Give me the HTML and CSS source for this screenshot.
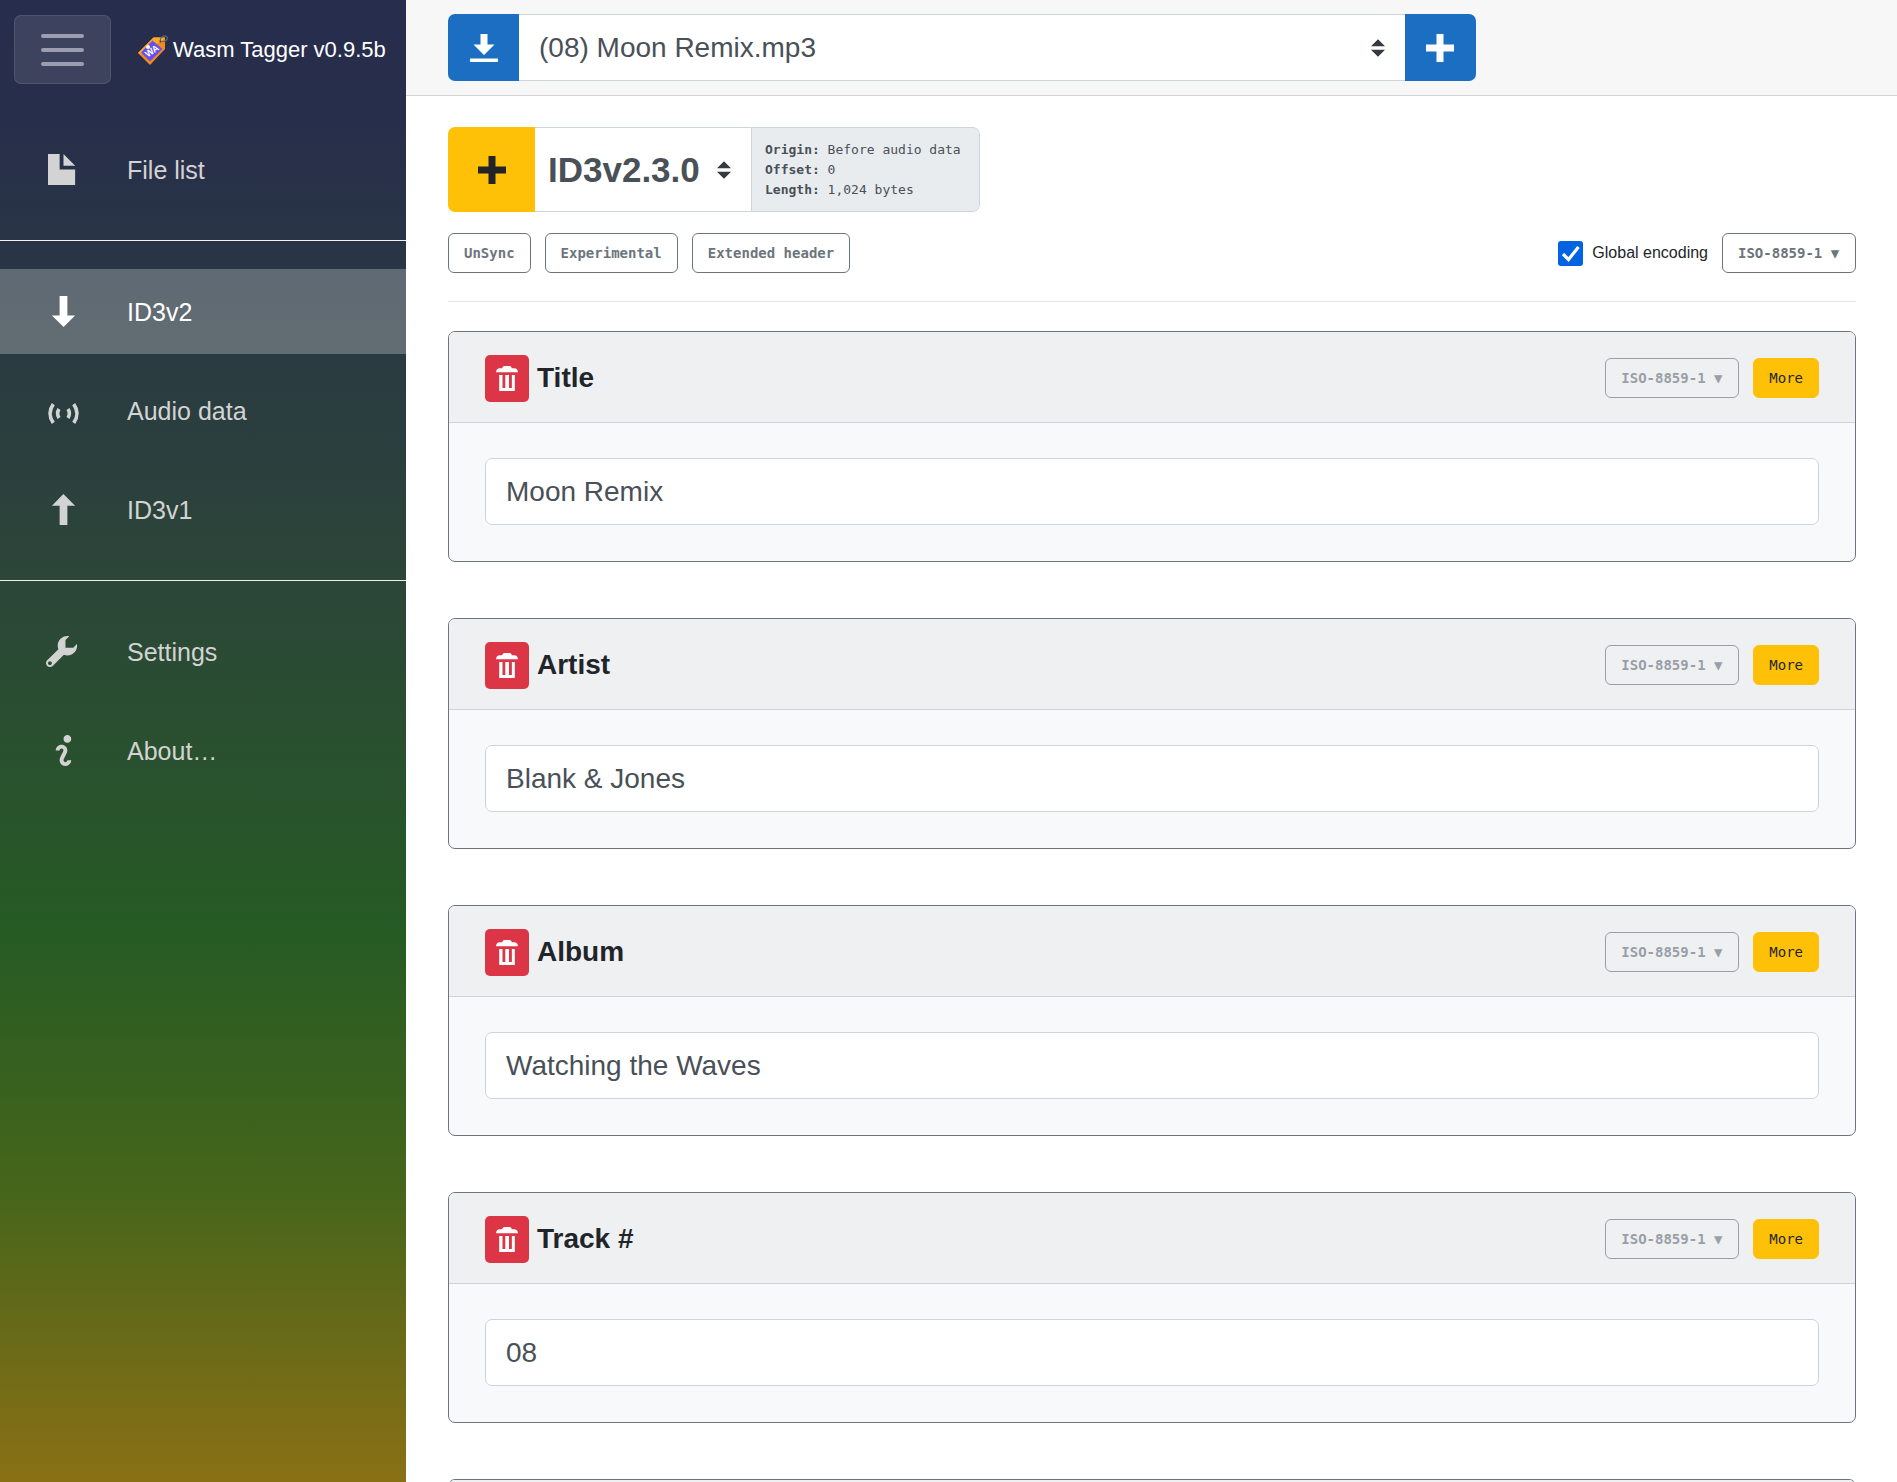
FILE: index.html
```html
<!DOCTYPE html>
<html lang="en">
<head>
<meta charset="utf-8">
<meta name="viewport" content="width=device-width, initial-scale=1">
<title>Wasm Tagger</title>
<link rel="stylesheet" href="styles.css">
</head>
<body>
<svg class="sprite" aria-hidden="true">
  <symbol id="i-file" viewBox="0 0 8 8"><path d="M0 0v8h7v-4h-4v-4h-3zm4 0v3h3l-3-3z"/></symbol>
  <symbol id="i-down" viewBox="-1 0 8 8"><path d="M2 0v5h-2l3.03 3 2.97-3h-2v-5h-2z"/></symbol>
  <symbol id="i-up" viewBox="-1 0 8 8"><path d="M2.97 0l-2.97 3h2v5h2v-5h2l-3.03-3z"/></symbol>
  <symbol id="i-audio" viewBox="0 0 31 31"><g fill="none" stroke="currentColor"><path stroke-width="3.6" d="M5.300 9.100Q-1.300 18.500 5.300 27.900M25.700 9.100Q32.300 18.500 25.700 27.900"/><path stroke-width="3.600" d="M11 14Q8.200 18.500 11 23M20 14Q22.800 18.500 20 23"/></g></symbol>
  <symbol id="i-wrench" viewBox=".5 0 8 8" overflow="visible"><path d="M5.500 0c-1.380 0-2.500 1.120-2.500 2.500 0 .32.080.62.190.91l-2.910 2.880c-.39.390-.39 1.050 0 1.440.2.200.46.280.72.280.26 0 .52-.09.720-.28l2.880-2.910c.28.110.58.190.91.190 1.380 0 2.500-1.120 2.500-2.500 0-.16 0-.32-.03-.47l-.97.970h-2v-2l.97-.97c-.15-.03-.31-.03-.47-.03zm-4.500 6.500c.28 0 .5.220.5.500s-.22.500-.5.500-.5-.22-.5-.5.220-.5.500-.5z"/></symbol>
  <symbol id="i-info" viewBox="-2 0 8 8"><path d="M3 0c-.55 0-1 .45-1 1s.45 1 1 1 1-.45 1-1-.45-1-1-1zm-1.500 2.500c-.83 0-1.500.67-1.500 1.500h1c0-.28.220-.5.500-.5s.5.220.5.500-1 1.640-1 2.500c0 .86.670 1.500 1.500 1.500s1.500-.67 1.500-1.500h-1c0 .28-.22.500-.5.500s-.5-.22-.5-.5c0-.36 1-1.840 1-2.500 0-.81-.67-1.500-1.500-1.500z"/></symbol>
  <symbol id="i-download" viewBox="0 0 8 8"><path d="M3 0v3h-2l3 3 3-3h-2v-3h-2zm-3 7v1h8v-1h-8z"/></symbol>
  <symbol id="i-plus" viewBox="0 0 8 8"><path d="M3 0v3h-3v2h3v3h2v-3h3v-2h-3v-3h-2z"/></symbol>
  <symbol id="i-trash" viewBox="0 0 7 8"><path d="M3 0c-.55 0-1 .1-1 .7h-.8c-.7 0-1.200.5-1.200 1.300h7c0-.8-.5-1.300-1.200-1.300h-.8c0-.6-.45-.7-1-.7zM1 2.900v5.100h5v-5.100h-.95v4.100h-.9v-4.100h-1.200v4.100h-.9v-4.100z"/></symbol>
</svg>

<div class="app">
  <aside class="sidebar">
    <div class="brand-bar">
      <button class="menu-button" type="button" aria-label="Toggle menu">
        <svg viewBox="0 0 43 32" width="43" height="32" fill="none" stroke="currentColor" stroke-width="4" stroke-linecap="round"><path d="M2 2h39M2 16h39M2 30h39"/></svg>
      </button>
      <a class="brand" href="#">
        <svg class="logo" viewBox="0 0 30 30" aria-hidden="true">
          <path fill="#f58a1b" d="M0 18L15.500 2.500H27V14L12 30z"/>
          <path fill="#ffa928" d="M0 18L15.500 2.500H27L25 5L2.500 19z"/>
          <path fill="#654ff0" d="M3 17.500L14.500 5.500L24.500 14L12 26.500z"/>
          <circle cx="10" cy="12" r="2" fill="#fff"/>
          <path fill="none" stroke="#506873" stroke-width="1.200" d="M22 6C22 2 26 0 28.500 1.500C31 3 28 7 24 6.500"/>
          <circle cx="22.500" cy="6.500" r="1" fill="#3a3550"/>
          <text class="logo-text" x="14" y="19" text-anchor="middle" transform="rotate(-35 14 16)">WA</text>
        </svg>
        <span>Wasm Tagger v0.9.5b</span>
      </a>
    </div>
    <nav>
      <ul class="nav-group">
        <li><a class="nav-link" href="#files"><svg class="nav-icon"><use href="#i-file"/></svg>File list</a></li>
      </ul>
      <ul class="nav-group">
        <li><a class="nav-link active" href="#id3v2" aria-current="page"><svg class="nav-icon"><use href="#i-down"/></svg>ID3v2</a></li>
        <li><a class="nav-link" href="#audio"><svg class="nav-icon"><use href="#i-audio"/></svg>Audio data</a></li>
        <li><a class="nav-link" href="#id3v1"><svg class="nav-icon"><use href="#i-up"/></svg>ID3v1</a></li>
      </ul>
      <ul class="nav-group">
        <li><a class="nav-link" href="#settings"><svg class="nav-icon"><use href="#i-wrench"/></svg>Settings</a></li>
        <li><a class="nav-link" href="#about"><svg class="nav-icon"><use href="#i-info"/></svg>About…</a></li>
      </ul>
    </nav>
  </aside>

  <main class="main">
    <header class="topbar">
      <div class="file-group">
        <button class="btn-primary" type="button" aria-label="Download"><svg class="icon"><use href="#i-download"/></svg></button>
        <select class="file-select" aria-label="File"><option>(08) Moon Remix.mp3</option></select>
        <button class="btn-primary" type="button" aria-label="Add file"><svg class="icon"><use href="#i-plus"/></svg></button>
      </div>
    </header>

    <div class="content">
      <div class="tag-group">
        <button class="add-frame" type="button" aria-label="Add frame"><svg class="icon"><use href="#i-plus"/></svg></button>
        <select class="version-select" aria-label="Tag version"><option>ID3v2.3.0</option></select>
        <div class="tag-info">
          <div><b>Origin:</b> Before audio data</div>
          <div><b>Offset:</b> 0</div>
          <div><b>Length:</b> 1,024 bytes</div>
        </div>
      </div>

      <div class="toolbar">
        <button class="btn-small" type="button">UnSync</button>
        <button class="btn-small" type="button">Experimental</button>
        <button class="btn-small" type="button">Extended header</button>
        <label class="check"><input type="checkbox" checked>Global encoding</label>
        <select class="btn-small" aria-label="Global encoding type"><option>ISO-8859-1 ▼</option></select>
      </div>

      <div class="frames">
        <section class="card">
          <div class="card-header">
            <button class="btn-delete" type="button" aria-label="Delete Title"><svg><use href="#i-trash"/></svg></button>
            <h2><label for="f-title">Title</label></h2>
            <select class="btn-small" aria-label="Title encoding" disabled><option>ISO-8859-1 ▼</option></select>
            <button class="btn-more" type="button">More</button>
          </div>
          <div class="card-body"><input id="f-title" type="text" value="Moon Remix"></div>
        </section>
        <section class="card">
          <div class="card-header">
            <button class="btn-delete" type="button" aria-label="Delete Artist"><svg><use href="#i-trash"/></svg></button>
            <h2><label for="f-artist">Artist</label></h2>
            <select class="btn-small" aria-label="Artist encoding" disabled><option>ISO-8859-1 ▼</option></select>
            <button class="btn-more" type="button">More</button>
          </div>
          <div class="card-body"><input id="f-artist" type="text" value="Blank &amp; Jones"></div>
        </section>
        <section class="card">
          <div class="card-header">
            <button class="btn-delete" type="button" aria-label="Delete Album"><svg><use href="#i-trash"/></svg></button>
            <h2><label for="f-album">Album</label></h2>
            <select class="btn-small" aria-label="Album encoding" disabled><option>ISO-8859-1 ▼</option></select>
            <button class="btn-more" type="button">More</button>
          </div>
          <div class="card-body"><input id="f-album" type="text" value="Watching the Waves"></div>
        </section>
        <section class="card">
          <div class="card-header">
            <button class="btn-delete" type="button" aria-label="Delete Track #"><svg><use href="#i-trash"/></svg></button>
            <h2><label for="f-track">Track #</label></h2>
            <select class="btn-small" aria-label="Track encoding" disabled><option>ISO-8859-1 ▼</option></select>
            <button class="btn-more" type="button">More</button>
          </div>
          <div class="card-body"><input id="f-track" type="text" value="08"></div>
        </section>
        <section class="card">
          <div class="card-header"></div>
        </section>
      </div>
    </div>
  </main>
</div>
</body>
</html>
```

FILE: styles.css
```css
* { box-sizing: border-box; }

body {
  margin: 0;
  background: #fff;
  color: #212529;
  font: 28px/42px "Liberation Sans", Arial, sans-serif;
}

button, input, select { margin: 0; font: inherit; }
select { appearance: none; }
svg { display: block; fill: currentColor; }
.sprite { display: none; }
.icon { width: 28px; height: 28px; }

.app {
  display: flex;
  height: 100vh;
  overflow: hidden;
}

/* Sidebar */
.sidebar {
  flex: 0 0 406px;
  color: #fff;
  background: linear-gradient(180deg, #272d4c 0%, #272e4b 8%, #2c4539 38%, #28532c 54%, #265b24 63%, #45651b 80%, #8a7015 100%);
}

.brand-bar {
  display: flex;
  align-items: center;
  gap: 27px;
  height: 99px;
  padding: 0 14px;
}

.menu-button {
  display: flex;
  align-items: center;
  justify-content: center;
  width: 97px;
  height: 69px;
  color: #9c9db0;
  background: rgba(255, 255, 255, .1);
  border: 1px solid rgba(255, 255, 255, .1);
  border-radius: 7px;
}

.brand {
  display: flex;
  align-items: center;
  gap: 5px;
  color: #fff;
  font-size: 22px;
  white-space: nowrap;
  text-decoration: none;
}

.logo { width: 30px; height: 30px; }
.logo-text { fill: #fff; font-size: 9px; font-weight: 700; }

.nav-group {
  display: flex;
  flex-direction: column;
  gap: 14px;
  margin: 0;
  padding: 28px 0;
  list-style: none;
}

.nav-group + .nav-group { border-top: 1px solid #f0f0f0; }

.nav-link {
  display: flex;
  align-items: center;
  gap: 48px;
  height: 85px;
  padding: 0 48px;
  color: #d3d3d3;
  font-size: 25px;
  text-decoration: none;
}

.nav-link.active {
  color: #fff;
  background: rgba(255, 255, 255, .26);
}

.nav-icon { width: 31px; height: 31px; overflow: visible; }
symbol { overflow: visible; }

/* Top bar */
.main { flex: 1; min-width: 0; }

.topbar {
  padding: 14px 41px 14px 42px;
  background: #f7f7f7;
  border-bottom: 1px solid #d3d6d8;
}

.file-group {
  display: flex;
  width: 73%;
  height: 67px;
  border-radius: 7px;
  overflow: hidden;
}

.btn-primary {
  display: flex;
  align-items: center;
  justify-content: center;
  flex: 0 0 71px;
  color: #fff;
  background: #1b6ec2;
  border: 0;
}

.file-select, .version-select {
  color: #495057;
  background: #fff url("data:image/svg+xml,%3Csvg xmlns='http://www.w3.org/2000/svg' viewBox='0 0 4 5'%3E%3Cpath fill='%23343a40' d='M2 0L0 2h4zm0 5L0 3h4z'/%3E%3C/svg%3E") no-repeat right 20px center / 14px 18px;
  border: 1px solid #ced4da;
  border-width: 1px 0;
  border-radius: 0;
}

.file-select {
  flex: 1;
  min-width: 0;
  padding: 0 48px 0 20px;
}

/* Tag header */
.content { padding: 31px 41px 0 42px; }

.tag-group {
  display: flex;
  width: fit-content;
  height: 85px;
  border-radius: 7px;
  overflow: hidden;
}

.add-frame {
  display: flex;
  align-items: center;
  justify-content: center;
  width: 87px;
  color: #212529;
  background: #ffc107;
  border: 0;
}

.version-select {
  padding: 0 51px 0 13px;
  font-size: 35px;
  font-weight: 700;
}

.tag-info {
  display: flex;
  flex-direction: column;
  justify-content: center;
  padding: 0 18px 0 13px;
  color: #495057;
  background: #e9ecef;
  border: 1px solid #ced4da;
  border-radius: 0 7px 7px 0;
  font: 13px/20px "DejaVu Sans Mono", monospace;
  white-space: nowrap;
}

.toolbar {
  display: flex;
  align-items: center;
  gap: 14px;
  margin-top: 21px;
  padding-bottom: 28px;
  border-bottom: 1px solid #e5e5e5;
}

.btn-small, .btn-more {
  height: 40px;
  padding: 0 15px;
  border: 1px solid #6c757d;
  border-radius: 6px;
  font: 700 14px/20px "DejaVu Sans Mono", monospace;
}

.btn-small { color: #6c757d; background: transparent; }
.btn-small:disabled { opacity: .65; }

.btn-more {
  color: #212529;
  background: #ffc107;
  border-color: #ffc107;
  font-weight: 400;
}

.check {
  display: flex;
  align-items: center;
  gap: 9px;
  margin-left: auto;
  font-size: 16px;
  line-height: 24px;
}

.check input {
  appearance: none;
  width: 25px;
  height: 25px;
  border-radius: 3px;
  background: #0063e1 url("data:image/svg+xml,%3Csvg xmlns='http://www.w3.org/2000/svg' viewBox='0 0 25 25'%3E%3Cpath fill='none' stroke='%23fff' stroke-width='3.200' d='M5 13l5.500 5.500L20.500 6'/%3E%3C/svg%3E");
}

/* Frame cards */
.frames {
  display: flex;
  flex-direction: column;
  gap: 56px;
  margin-top: 29px;
}

.card {
  background: #f8f9fb;
  border: 1px solid #6c757d;
  border-radius: 7px;
  overflow: hidden;
}

.card-header {
  display: flex;
  align-items: center;
  gap: 14px;
  height: 91px;
  padding: 2px 36px 0;
  background: #eff0f2;
  border-bottom: 1px solid #d0d3d6;
}

.card-header h2 {
  flex: 1;
  margin: 0 0 0 -6px;
  font-size: 28px;
  font-weight: 700;
}

.btn-delete {
  display: flex;
  align-items: center;
  justify-content: center;
  width: 44px;
  height: 47px;
  padding: 0;
  color: #fff;
  background: #dc3545;
  border: 0;
  border-radius: 5px;
}

.btn-delete svg { width: 22px; height: 25px; }

.card-body { padding: 35px 36px 36px; }

.card-body input {
  display: block;
  width: 100%;
  height: 67px;
  padding: 0 20px;
  color: #495057;
  background: #fff;
  border: 1px solid #ced4da;
  border-radius: 7px;
}
```
